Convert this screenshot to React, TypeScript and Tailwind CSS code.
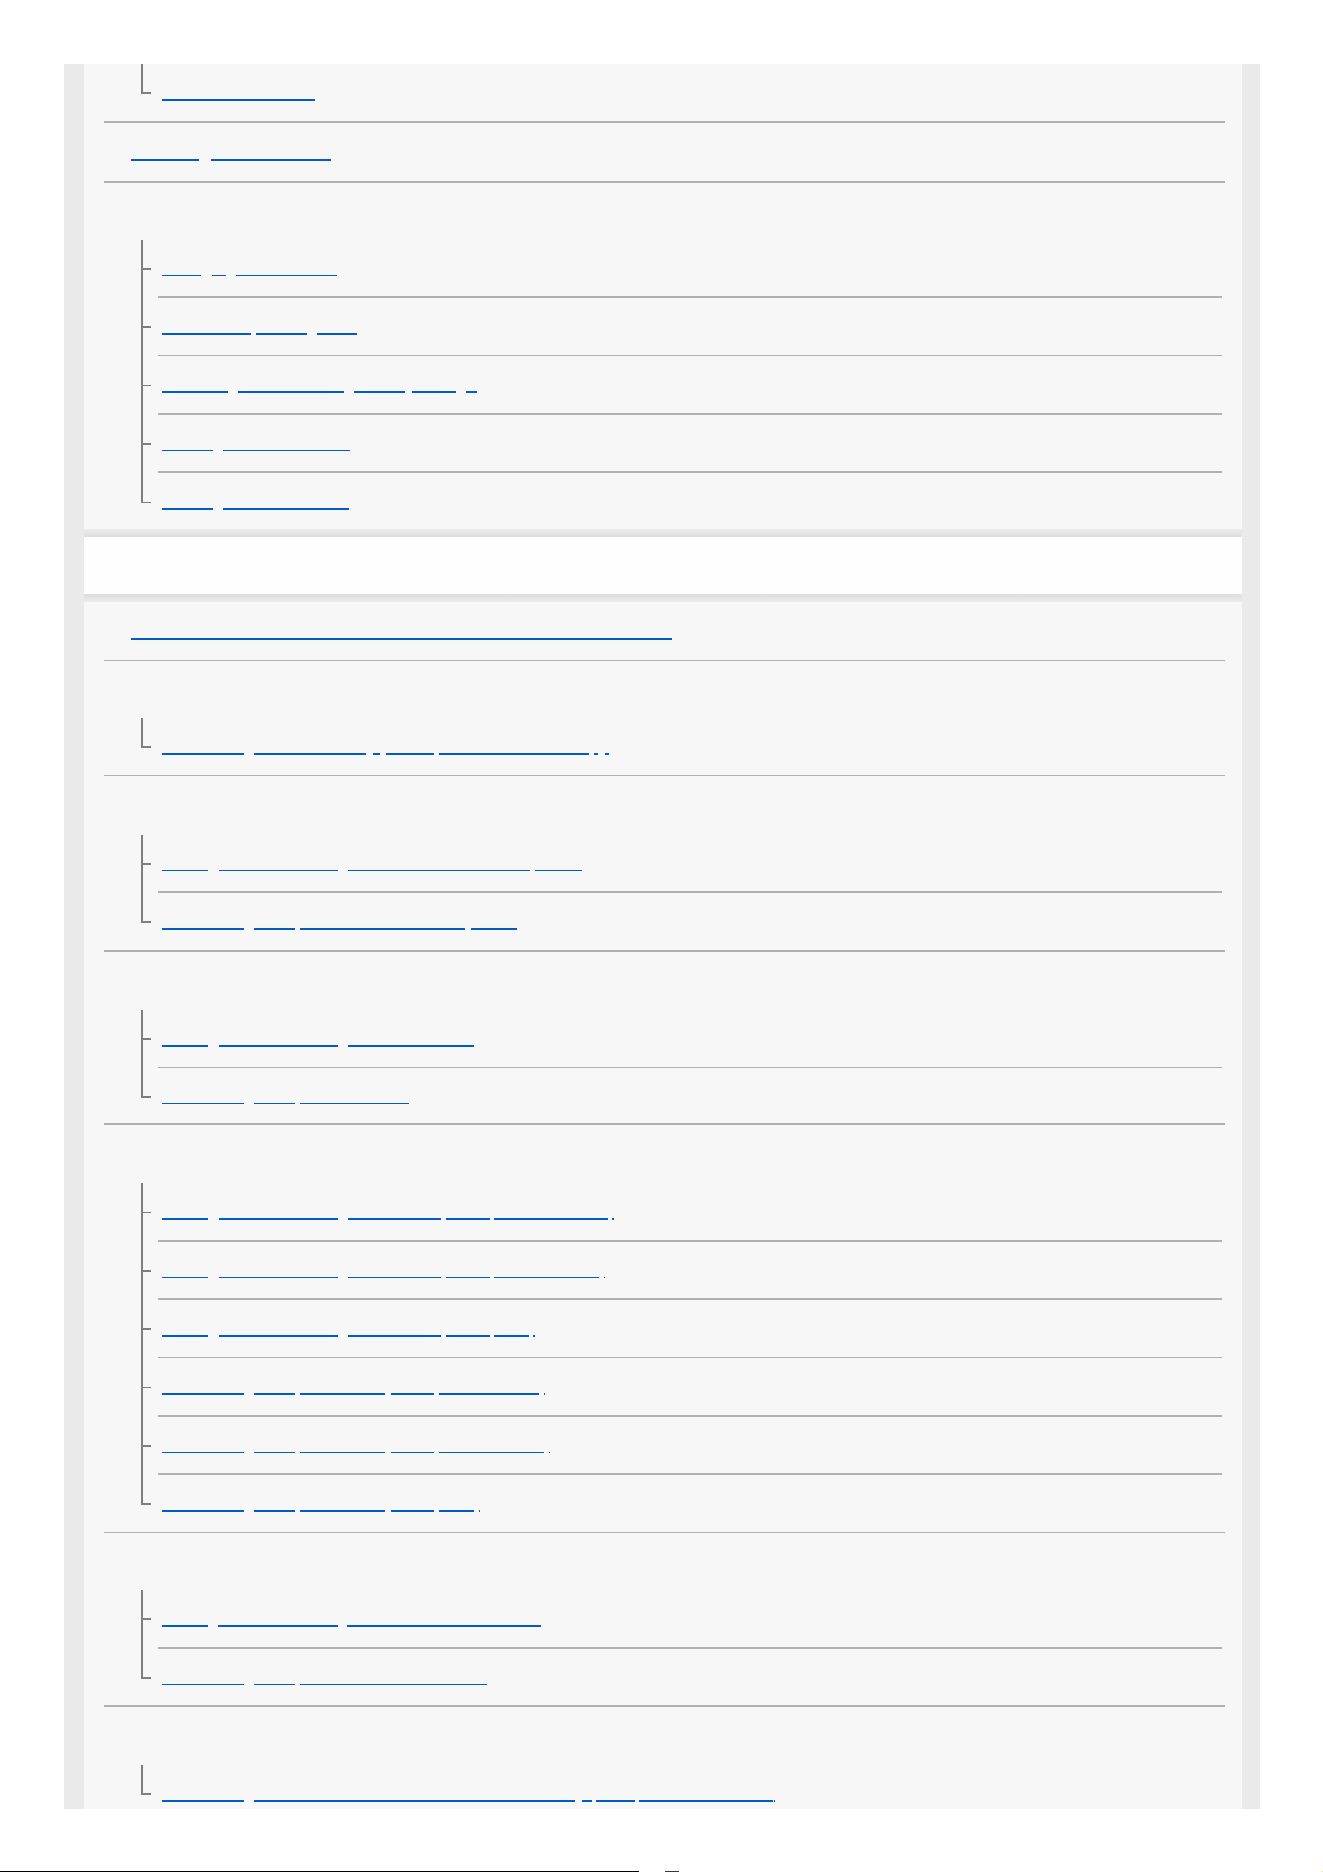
type Seg = [number, number];

type RowData =
  | { kind: 'head'; h: number }
  | { kind: 'link'; h: number; segs: Seg[]; ut: number; dt: number }
  | { kind: 'item'; h: number; segs: Seg[]; ut: number; tt: number; dt: number; last?: boolean };

// x positions of the underline runs are page coordinates; the panel starts at x=84
const PANEL_X = 84;

const topSection: RowData[] = [
  { kind: 'item', h: 59, segs: [[162, 315]], ut: 2, tt: 2, dt: 2, last: true },
  { kind: 'link', h: 60, segs: [[131, 199], [211, 331]], ut: 2, dt: 2 },
  { kind: 'head', h: 57 },
  { kind: 'item', h: 58, segs: [[162, 201], [211.6, 226], [236, 337]], ut: 1, tt: 2, dt: 2 },
  { kind: 'item', h: 58, segs: [[162, 251], [256, 307], [317, 357]], ut: 2, tt: 2, dt: 1 },
  { kind: 'item', h: 59, segs: [[162, 228], [238, 344], [353.6, 405], [412.5, 456], [466, 477]], ut: 2, tt: 1, dt: 2 },
  { kind: 'item', h: 58, segs: [[162, 213], [223, 350]], ut: 1, tt: 2, dt: 2 },
  { kind: 'item', h: 56, segs: [[162, 213], [223, 349]], ut: 2, tt: 1, dt: 0, last: true },
];

const mainSection: RowData[] = [
  { kind: 'link', h: 59, segs: [[131, 672]], ut: 2, dt: 1 },
  { kind: 'head', h: 57 },
  {
    kind: 'item', h: 58,
    segs: [[162, 244], [254, 366], [373, 380], [386, 434], [439, 589], [594, 598], [605, 609]],
    ut: 2, tt: 2, dt: 1, last: true,
  },
  { kind: 'head', h: 59 },
  { kind: 'item', h: 58, segs: [[162, 208], [219, 337.5], [348, 530], [535, 582]], ut: 1, tt: 2, dt: 2 },
  { kind: 'item', h: 59, segs: [[162, 244], [254, 295], [300, 465], [470.5, 517]], ut: 2, tt: 2, dt: 2, last: true },
  { kind: 'head', h: 58 },
  { kind: 'item', h: 58, segs: [[162, 208], [219, 337.5], [348, 474]], ut: 2, tt: 2, dt: 1 },
  { kind: 'item', h: 57, segs: [[162, 244], [254, 295], [300, 409]], ut: 1, tt: 2, dt: 2, last: true },
  { kind: 'head', h: 58 },
  {
    kind: 'item', h: 59,
    segs: [[162, 208], [219, 337.5], [348, 440.6], [446, 489.7], [494, 608], [612.5, 614]],
    ut: 2, tt: 1, dt: 2,
  },
  {
    kind: 'item', h: 58,
    segs: [[162, 208], [219, 337.5], [348, 440.6], [446, 489.7], [494, 598.7], [603.6, 605]],
    ut: 1, tt: 2, dt: 2,
  },
  {
    kind: 'item', h: 58,
    segs: [[162, 208], [219, 337.5], [348, 440.6], [446, 489.7], [494, 529], [533.5, 535]],
    ut: 2, tt: 2, dt: 1,
  },
  {
    kind: 'item', h: 59,
    segs: [[162, 244], [254, 295], [300, 385], [391, 434], [439, 539], [543.8, 545]],
    ut: 2, tt: 1, dt: 2,
  },
  {
    kind: 'item', h: 58,
    segs: [[162, 244], [254, 295], [300, 385], [391, 434], [439, 544], [548.7, 550]],
    ut: 1, tt: 2, dt: 2,
  },
  {
    kind: 'item', h: 58,
    segs: [[162, 244], [254, 295], [300, 385], [391, 434], [439, 474], [478.6, 480]],
    ut: 2, tt: 2, dt: 1, last: true,
  },
  { kind: 'head', h: 57 },
  { kind: 'item', h: 59, segs: [[162, 208], [218, 337.8], [347, 541]], ut: 2, tt: 2, dt: 2 },
  { kind: 'item', h: 58, segs: [[162, 244], [254, 295], [300, 487]], ut: 1, tt: 2, dt: 2, last: true },
  { kind: 'head', h: 58 },
  {
    kind: 'item', h: 44,
    segs: [[162, 244], [254, 575], [582, 592], [596, 635], [639, 773], [774, 775]],
    ut: 2, tt: 2, dt: 0, last: true,
  },
];

function Underline({ segs, thickness }: { segs: Seg[]; thickness: number }) {
  let prev = segs[0][0];
  return (
    <a href="#" className="flex" style={{ marginLeft: segs[0][0] - PANEL_X }}>
      {segs.map(([from, to], i) => {
        const gap = from - prev;
        prev = to;
        return (
          <span
            key={i}
            className="block bg-[#005cc8]"
            style={{ marginLeft: gap, width: to - from, height: thickness }}
          />
        );
      })}
    </a>
  );
}

function Divider({ full, thickness }: { full: boolean; thickness: number }) {
  return (
    <div
      className={full ? 'ml-[20px] mr-[17px] bg-[#b1b1b1]' : 'ml-[74px] mr-[20px] bg-[#b1b1b1]'}
      style={{ height: thickness }}
    />
  );
}

function Row({ row }: { row: RowData }) {
  if (row.kind === 'head') return <div style={{ height: row.h }} />;

  if (row.kind === 'link') {
    return (
      <div className="flex flex-col" style={{ height: row.h }}>
        <div className="pt-[36px]">
          <Underline segs={row.segs} thickness={row.ut} />
        </div>
        <div className="flex-1" />
        <Divider full thickness={row.dt} />
      </div>
    );
  }

  const tickTop = row.tt === 2 ? 28 : 29;
  return (
    <div className="relative flex flex-col" style={{ height: row.h }}>
      {/* tree connector */}
      <span
        className="absolute left-[57px] top-0 w-[2px] bg-[#7f7f7f]"
        style={{ height: row.last ? tickTop + row.tt : row.h }}
      />
      <span
        className="absolute left-[57px] w-[10px] bg-[#7f7f7f]"
        style={{ top: tickTop, height: row.tt }}
      />
      <div className="pt-[35px]">
        <Underline segs={row.segs} thickness={row.ut} />
      </div>
      <div className="flex-1" />
      {row.dt > 0 && <Divider full={!!row.last} thickness={row.dt} />}
    </div>
  );
}

export default function App() {
  return (
    <div className="relative h-[1872px] w-[1323px] overflow-hidden bg-white font-['Liberation_Sans',sans-serif]">
      <div className="h-[64px]" />
      <div className="ml-[64px] h-[1745px] w-[1196px] overflow-hidden bg-[#eaeaea] pl-[20px] pr-[18px]">
        <section className="bg-[#f7f7f7]">
          {topSection.map((row, i) => (
            <Row key={i} row={row} />
          ))}
        </section>

        {/* category bar */}
        <div className="h-[8px] rounded-r-[3px] bg-linear-to-b from-[#eeeeee] to-[#dcdcdc]" />
        <div className="h-[57px] bg-[#fefefe]" />
        <div className="h-[8px] rounded-r-[3px] bg-linear-to-b from-[#dcdcdc] to-[#ececec]" />

        <section className="bg-[#f7f7f7]">
          {mainSection.map((row, i) => (
            <Row key={i} row={row} />
          ))}
        </section>
      </div>

      <div className="mt-[62px] flex h-px">
        <div className="w-[639px] bg-black" />
        <div className="ml-[26px] w-[14px] bg-[#3b3352]" />
        <div className="ml-auto w-px bg-yellow-300" />
      </div>
    </div>
  );
}
